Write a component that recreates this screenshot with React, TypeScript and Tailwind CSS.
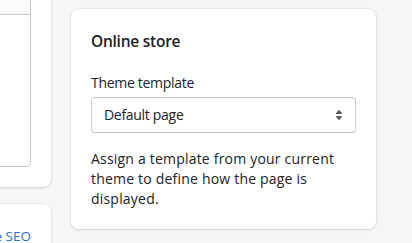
import React from 'react';

function SelectIcon() {
  return (
    <svg viewBox="0 0 20 20" className="h-5 w-5 fill-[#5c5f62]">
      <path d="M7.676 9h4.648c.563 0 .879-.603.53-1.014l-2.323-2.746a.708.708 0 0 0-1.062 0l-2.324 2.746c-.347.411-.032 1.014.531 1.014Zm4.648 2h-4.648c-.563 0-.878.603-.53 1.014l2.323 2.746c.27.32.792.32 1.062 0l2.323-2.746c.349-.411.033-1.014-.53-1.014Z" />
    </svg>
  );
}

const card = 'rounded-lg bg-white shadow-[0_0_0_1px_rgba(63,63,68,0.05),0_1px_3px_0_rgba(63,63,68,0.15)]';

export default function App() {
  return (
    <div className="h-[243px] w-[412px] overflow-hidden bg-[#f6f6f7] font-['Open_Sans',sans-serif] text-[14px] leading-5 text-[#202223]">
      <div className="flex items-start gap-5 pt-[9px]">
        {/* Left column, mostly off screen */}
        <div className="-ml-[349px] -mt-[60px] flex w-[400px] shrink-0 flex-col gap-[17px]">
          <div className={`${card} p-5`}>
            <div className="rounded border border-[#c9cccf]">
              <div className="h-[45px] border-b border-[#c9cccf] bg-[#fafbfb]" />
              <div className="h-[151px]" />
            </div>
          </div>
          <div className={`${card} p-5`}>
            <div className="flex h-6 items-center justify-between">
              <h2 className="text-[16px] font-semibold">Search engine listing preview</h2>
              <a className="text-[13.5px] text-[#2c6ecb]">Edit website SEO</a>
            </div>
          </div>
        </div>

        {/* Online store card */}
        <div className={`${card} w-[305px] shrink-0 p-5`}>
          <h2 className="text-[15.5px] font-semibold leading-6 tracking-[-0.25px]">Online store</h2>
          <div className="mt-5">
            <label className="block tracking-[-0.3px]">Theme template</label>
            <div className="mt-1 flex h-9 items-center justify-between rounded border border-[#c9cccf] border-b-[#babfc3] pl-3 pr-1.5">
              <span className="tracking-[-0.3px]">Default page</span>
              <SelectIcon />
            </div>
            <p className="mt-4 tracking-[0.2px]">Assign a template from your current theme to define how the page is displayed.</p>
          </div>
        </div>
      </div>
    </div>
  );
}
